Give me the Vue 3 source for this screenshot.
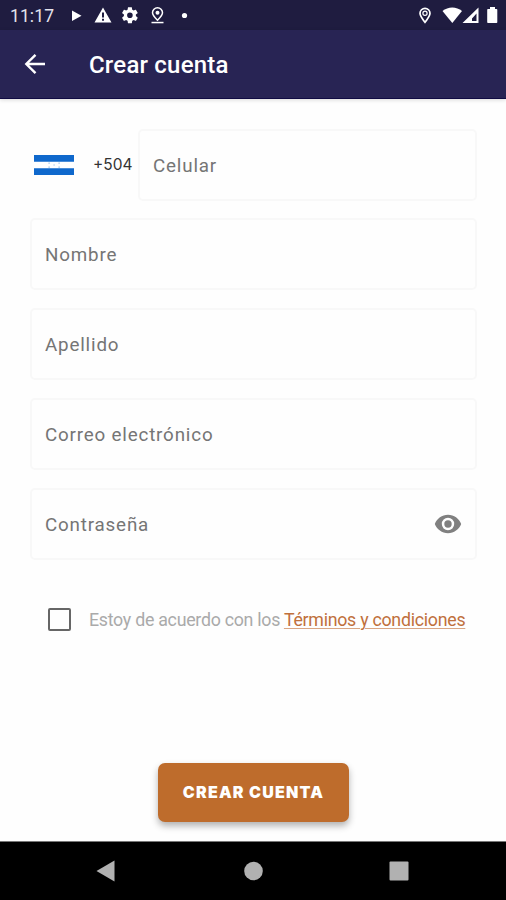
<script setup>
import { ref, reactive } from 'vue';

const form = reactive({
  celular: '',
  nombre: '',
  apellido: '',
  correo: '',
  contrasena: ''
});

const fields = [
  { key: 'nombre', label: 'Nombre', type: 'text' },
  { key: 'apellido', label: 'Apellido', type: 'text' },
  { key: 'correo', label: 'Correo electrónico', type: 'email' }
];

const showPassword = ref(false);
const accepted = ref(false);
</script>

<template>
  <div class="screen">
    <div class="status-bar">
      <span class="clock">11:17</span>
      <svg class="status-left" width="124" height="20" viewBox="0 0 124 20" fill="#fff">
        <path d="M2 4.500v10.500l9.500-5.250z" />
        <path fill-rule="evenodd" d="M33 1.500L41.500 16.500H24.500zM32 6.500v5h2v-5zM32 12.800v2h2v-2z" />
        <g transform="translate(50.300 -.3) scale(.8)">
          <path d="M19.430 12.980c.04-.32.07-.64.07-.98s-.03-.66-.07-.98l2.110-1.650c.19-.15.24-.42.12-.64l-2-3.460c-.12-.22-.39-.3-.61-.22l-2.490 1c-.52-.4-1.080-.73-1.690-.98l-.38-2.650C14.460 2.180 14.250 2 14 2h-4c-.25 0-.46.18-.49.42l-.38 2.650c-.61.25-1.170.59-1.690.98l-2.490-1c-.23-.09-.49 0-.61.22l-2 3.460c-.13.22-.07.49.12.64l2.110 1.650c-.04.32-.07.65-.07.98s.03.66.07.98l-2.110 1.650c-.19.15-.24.42-.12.64l2 3.460c.12.22.39.3.61.22l2.490-1c.52.4 1.080.73 1.690.98l.38 2.650c.03.24.24.42.49.42h4c.25 0 .46-.18.49-.42l.38-2.650c.61-.25 1.170-.59 1.690-.98l2.490 1c.23.09.49 0 .61-.22l2-3.460c.12-.22.07-.49-.12-.64zM12 15.500a3.500 3.500 0 1 1 0-7 3.500 3.500 0 0 1 0 7z" />
        </g>
        <path d="M87.500 14.200c-3-3-5-5-5-7.500a5 5 0 0 1 10 0c0 2.500-2 4.500-5 7.500z" fill="none" stroke="#fff" stroke-width="1.500" />
        <circle cx="87.500" cy="6.700" r="2" />
        <path d="M81.500 15.800h12v1.500h-12z" />
        <circle cx="114.500" cy="9.500" r="2.600" />
      </svg>
      <svg class="status-right" width="82" height="20" viewBox="0 0 82 20" fill="#fff">
        <path d="M9 16.300C6 12.500 4 10 4 7.300a5 5 0 0 1 10 0c0 2.700-2 5.200-5 9z" fill="none" stroke="#fff" stroke-width="1.700" />
        <circle cx="9" cy="7.200" r="2.100" fill="none" stroke="#fff" stroke-width="1.200" />
        <path d="M26.500 5C32 .2 40.500 .2 46 5L36.300 17z" />
        <path fill-rule="evenodd" d="M62.500 1.500V17H46.500zM60.500 7.500l-4.500 5V15h4.500z" />
        <path d="M72 3H74V1h5v2h1.500q.8 0 .8.800v12.400q0 .8-.8.800h-8.500q-.8 0-.8-.8V3.800q0-.8.8-.8z" />
      </svg>
    </div>

    <header class="app-bar">
      <button class="back" type="button" aria-label="Atrás">
        <svg width="22" height="22" viewBox="0 0 22 22" fill="none" stroke="#fff" stroke-width="2.400">
          <path d="M21 11H2.500M11.500 1.800L2.300 11l9.200 9.200" />
        </svg>
      </button>
      <h1>Crear cuenta</h1>
    </header>

    <form class="form" @submit.prevent>
      <div class="phone-row">
        <svg class="flag" width="40" height="20" viewBox="0 0 40 20">
          <path fill="#fff" d="M0 0h40v20H0z" />
          <path fill="#0f68cc" d="M0 0h40v6.700H0zM0 13.300h40V20H0z" />
          <path fill="#8dbbea" d="M14.500 7.500h1.200v1.200h-1.200zM24.500 7.500h1.200v1.200h-1.200zM19.500 9.400h1.200v1.200h-1.200zM14.500 11.500h1.200v1.200h-1.200zM24.500 11.500h1.200v1.200h-1.200z" />
        </svg>
        <span class="prefix">+504</span>
        <div class="field">
          <input v-model="form.celular" type="tel" placeholder="Celular" />
        </div>
      </div>

      <div v-for="f in fields" :key="f.key" class="field">
        <input v-model="form[f.key]" :type="f.type" :placeholder="f.label" />
      </div>

      <div class="field">
        <input
          v-model="form.contrasena"
          :type="showPassword ? 'text' : 'password'"
          placeholder="Contraseña"
        />
        <button class="eye" type="button" aria-label="Mostrar" @click="showPassword = !showPassword">
          <svg width="28" height="20" viewBox="0 0 28 20">
            <path
              fill="#808080"
              fill-rule="evenodd"
              d="M14 .8C8 .8 2.900 4.600.8 10c2.100 5.400 7.200 9.200 13.200 9.200s11.100-3.800 13.200-9.200C25.100 4.600 20 .8 14 .8zM14 16.200a6.200 6.200 0 1 1 0-12.400 6.200 6.200 0 0 1 0 12.400zM14 6.300a3.700 3.700 0 1 0 0 7.400 3.700 3.700 0 0 0 0-7.400z"
            />
          </svg>
        </button>
      </div>

      <label class="terms">
        <input v-model="accepted" type="checkbox" />
        <span>Estoy de acuerdo con los <a>Términos y condiciones</a></span>
      </label>

      <button class="submit" type="submit">CREAR CUENTA</button>
    </form>

    <nav class="nav-bar">
      <svg width="20" height="22" viewBox="0 0 20 22"><path fill="#b1b1b1" d="M18.500 .5v21L.5 11z" /></svg>
      <svg width="20" height="20" viewBox="0 0 20 20"><circle cx="10.500" cy="10" r="9.300" fill="#b1b1b1" /></svg>
      <svg width="20" height="20" viewBox="0 0 20 20"><rect x=".5" y=".5" width="19" height="19" rx="1" fill="#b1b1b1" /></svg>
    </nav>
  </div>
</template>

<style>
body {
  margin: 0;
}
</style>

<style scoped>
.screen {
  display: flex;
  flex-direction: column;
  width: 506px;
  height: 900px;
  overflow: hidden;
  background: #fefefe;
  font-family: Roboto, Inter, sans-serif;
}

button {
  border: 0;
  padding: 0;
  background: none;
  font-family: inherit;
}

svg {
  display: block;
  flex: none;
}

/* Barra de estado */
.status-bar {
  display: flex;
  align-items: center;
  flex: none;
  box-sizing: border-box;
  height: 30px;
  padding: 1px 8px 0 10px;
  background: #1f1c40;
}

.clock {
  width: 60px;
  color: #e4e3ec;
  font-size: 17.5px;
  letter-spacing: 0.1px;
}

.status-right {
  margin-left: auto;
}

/* Cabecera */
.app-bar {
  display: flex;
  align-items: center;
  flex: none;
  box-sizing: border-box;
  height: 69px;
  padding-left: 24px;
  background: #282454;
  border-bottom: 1px solid #100b43;
  box-shadow: 0 1px 4px rgba(0, 0, 0, 0.15);
}

.back {
  width: 65px;
}

h1 {
  margin: 2px 0 0;
  color: #fff;
  font-size: 24px;
  font-weight: 500;
  letter-spacing: 0.2px;
}

/* Formulario */
.form {
  display: flex;
  flex-direction: column;
  flex: 1;
  gap: 17.8px;
  padding: 29.5px 29px 0 30px;
}

.phone-row {
  display: flex;
  align-items: center;
}

.flag {
  margin-left: 4px;
}

.prefix {
  width: 45px;
  margin-left: 19px;
  color: #333;
  font-family: Inter, sans-serif;
  font-size: 15.5px;
  white-space: nowrap;
}

.field {
  display: flex;
  align-items: center;
  box-sizing: border-box;
  height: 72px;
  padding: 0 13px 0 13px;
  border: 2px solid #f8f8f8;
  border-radius: 5px;
}

.phone-row .field {
  flex: 1;
}

.field input {
  flex: 1;
  min-width: 0;
  padding: 2px 0 0;
  border: 0;
  outline: 0;
  background: none;
  color: #333;
  font-family: inherit;
  font-size: 18.8px;
  letter-spacing: 0.82px;
}

.field input::placeholder {
  color: #757575;
  opacity: 1;
}

.terms {
  display: flex;
  align-items: center;
  height: 24px;
  margin: 30px 0 0 18px;
  color: #aaa;
  font-size: 17.8px;
  letter-spacing: -0.27px;
  white-space: nowrap;
}

.terms input {
  flex: none;
  box-sizing: border-box;
  appearance: none;
  width: 23px;
  height: 23px;
  margin: 0 18px 0 0;
  border: 2px solid #666;
  border-radius: 2px;
}

.terms input:checked {
  background: #be6c2c;
}

.terms a {
  color: #c0703c;
  text-decoration: underline;
  text-decoration-color: #d9a583;
  text-decoration-thickness: 1px;
  text-underline-offset: 2px;
}

.submit {
  align-self: center;
  width: 191px;
  height: 59px;
  margin-top: 113.5px;
  border-radius: 7px;
  background: #be6c2c;
  box-shadow: 0 4px 7px rgba(0, 0, 0, 0.3);
  color: #fff;
  font-family: Inter, sans-serif;
  font-size: 16px;
  font-weight: 900;
  letter-spacing: 1.2px;
}

/* Barra de navegación de Android */
.nav-bar {
  display: flex;
  align-items: center;
  justify-content: space-between;
  flex: none;
  box-sizing: border-box;
  height: 59px;
  padding: 0 97px 0 96px;
  background: #000;
  border-top: 1px solid #777;
}
</style>
